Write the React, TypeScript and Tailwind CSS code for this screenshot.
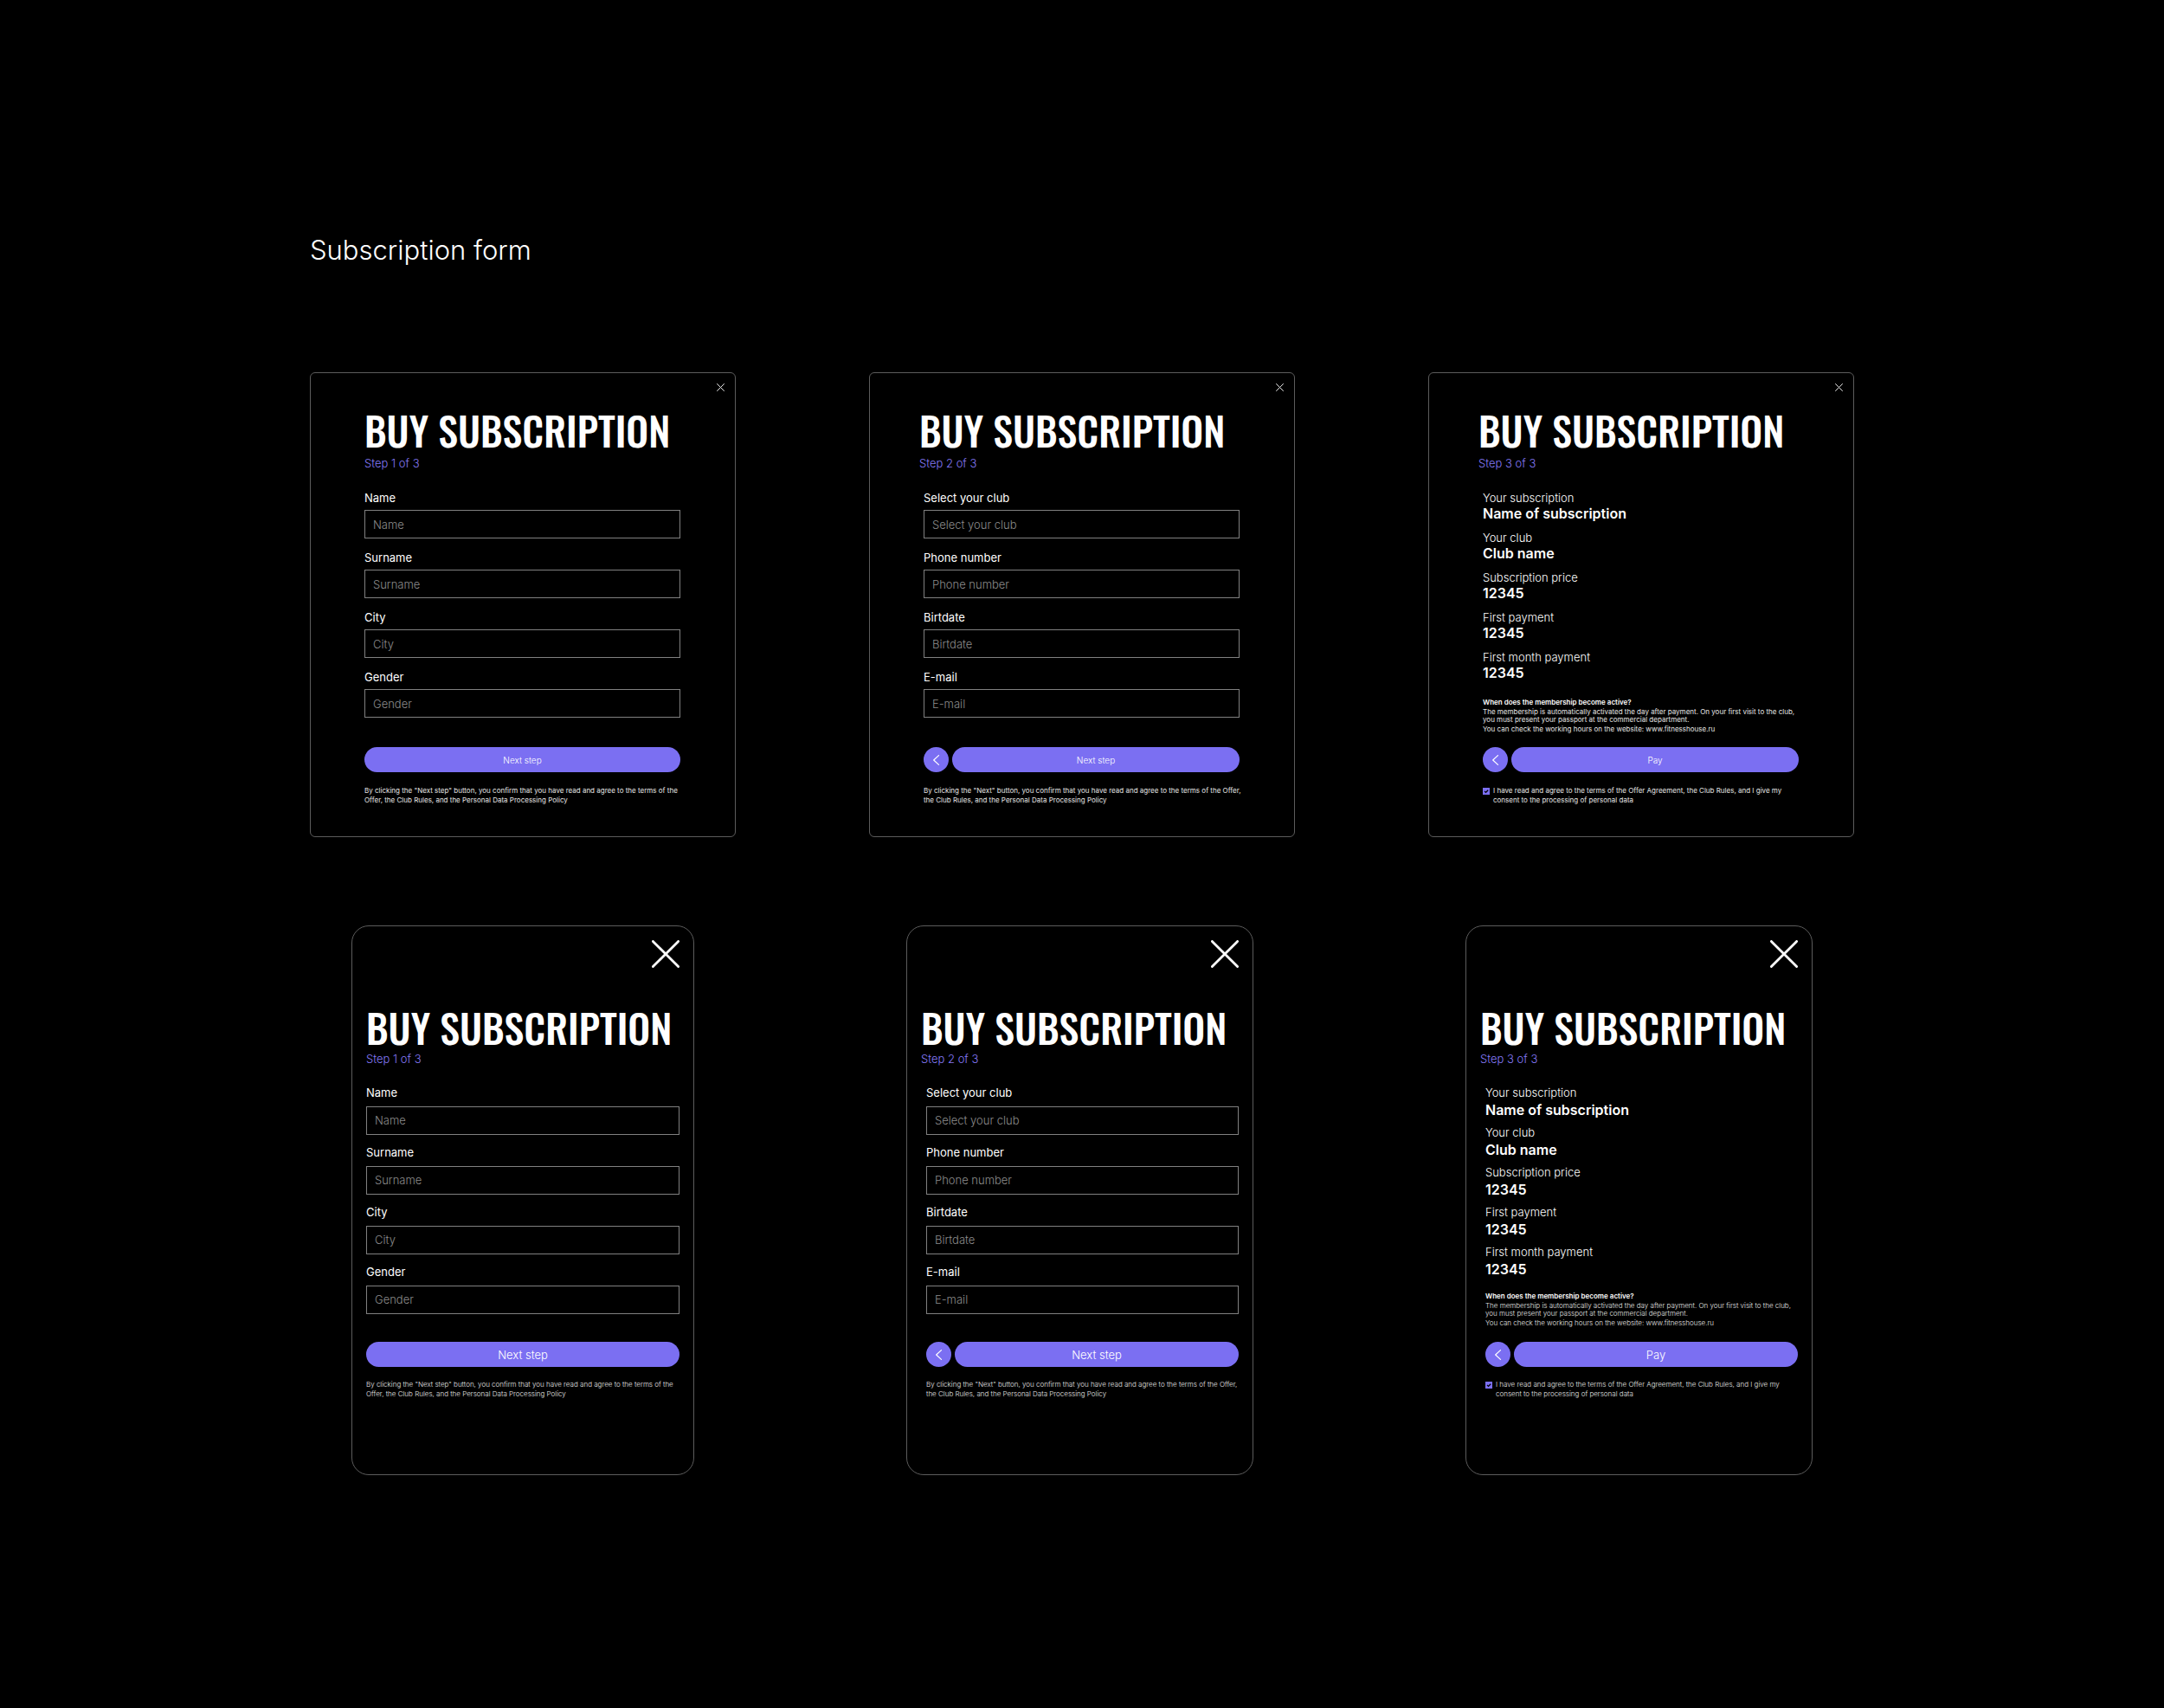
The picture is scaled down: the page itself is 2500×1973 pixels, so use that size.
import { useId } from 'react'

type Size = 'desktop' | 'mobile'

const steps = [
  {
    fields: ['Name', 'Surname', 'City', 'Gender'],
    action: 'Next step',
    terms: [
      'By clicking the "Next step" button, you confirm that you have read and agree to the terms of the',
      'Offer, the Club Rules, and the Personal Data Processing Policy',
    ],
  },
  {
    fields: ['Select your club', 'Phone number', 'Birtdate', 'E-mail'],
    action: 'Next step',
    terms: [
      'By clicking the "Next" button, you confirm that you have read and agree to the terms of the Offer,',
      'the Club Rules, and the Personal Data Processing Policy',
    ],
  },
  {
    fields: [],
    action: 'Pay',
    terms: [
      'I have read and agree to the terms of the Offer Agreement, the Club Rules, and I give my',
      'consent to the processing of personal data',
    ],
  },
]

const summary = [
  { label: 'Your subscription', value: 'Name of subscription' },
  { label: 'Your club', value: 'Club name' },
  { label: 'Subscription price', value: '12345' },
  { label: 'First payment', value: '12345' },
  { label: 'First month payment', value: '12345' },
]

function CloseButton({ size }: { size: Size }) {
  return (
    <button type="button" aria-label="Close" className="block">
      {size === 'desktop' ? (
        <svg className="block size-[9px]" viewBox="0 0 9 9" fill="none" stroke="#e5e5e5" strokeLinecap="round">
          <path d="M.5.5l8 8M8.5.5l-8 8" />
        </svg>
      ) : (
        <svg className="block size-8" viewBox="0 0 32 32" fill="none" stroke="#fff" strokeWidth="2.8" strokeLinecap="round">
          <path d="M1.4 1.4l29.2 29.2M30.6 1.4L1.4 30.6" />
        </svg>
      )}
    </button>
  )
}

function Field({ label, size }: { label: string; size: Size }) {
  const id = useId()
  return (
    <div className={size === 'desktop' ? 'flex flex-col gap-1.5' : 'flex flex-col gap-2'}>
      <label htmlFor={id} className="text-[13px] leading-4">{label}</label>
      <input
        id={id}
        type="text"
        placeholder={label}
        className={`h-[33px] w-full border border-[#808080] bg-black px-[9px] text-[13px] leading-4 font-light text-white placeholder:text-[#8c8c8c] ${size === 'mobile' ? 'pb-0.5' : ''}`}
      />
    </div>
  )
}

function Summary({ size }: { size: Size }) {
  return (
    <>
      <dl className={size === 'desktop' ? 'flex flex-col gap-2.5' : 'flex flex-col gap-2'}>
        {summary.map((item) => (
          <div key={item.label} className={size === 'desktop' ? 'flex flex-col' : 'flex flex-col gap-0.5'}>
            <dt className="text-[13px] leading-4 font-light">{item.label}</dt>
            <dd className="text-base leading-5 font-semibold">{item.value}</dd>
          </div>
        ))}
      </dl>
      <div className={`flex flex-col gap-px text-[8px] leading-[11px] whitespace-nowrap ${size === 'desktop' ? 'mt-[19px]' : 'mt-4 font-light'}`}>
        <h3 className="font-semibold">When does the membership become active?</h3>
        <p className="leading-[9px] text-[#e5e5e5]">
          The membership is automatically activated the day after payment. On your first visit to the club,
          <br />
          you must present your passport at the commercial department.
        </p>
        <p className="text-[#e5e5e5]">You can check the working hours on the website: www.fitnesshouse.ru</p>
      </div>
    </>
  )
}

function Terms({ lines, size, checkbox }: { lines: string[]; size: Size; checkbox: boolean }) {
  const weight = size === 'desktop' ? 'font-normal' : 'font-light'
  const text = (
    <>
      {lines[0]}
      <br />
      {lines[1]}
    </>
  )
  if (!checkbox) {
    return <p className={`text-[8px] leading-[11px] whitespace-nowrap text-[#e5e5e5] ${weight}`}>{text}</p>
  }
  return (
    <label className={`flex items-start gap-1 text-[8px] leading-[11px] whitespace-nowrap text-[#e5e5e5] ${weight}`}>
      <span className="relative mt-0.5 block size-2">
        <input type="checkbox" defaultChecked className="peer block size-2 appearance-none bg-[#7b6ff2]" />
        <svg className="pointer-events-none absolute inset-0 hidden size-2 peer-checked:block" viewBox="0 0 8 8" fill="none" stroke="#000" strokeWidth="1.2">
          <path d="M2 3.8l1.5 1.5L6.2 2.8" />
        </svg>
      </span>
      <span>{text}</span>
    </label>
  )
}

function SubscriptionForm({ step, size }: { step: number; size: Size }) {
  const { fields, action, terms } = steps[step - 1]
  const desktop = size === 'desktop'
  const first = step === 1

  const card = desktop
    ? 'rounded-md pt-3 pb-9'
    : first
      ? 'w-[396px] rounded-[20px] pt-4 pb-[87px]'
      : 'w-[401px] rounded-[20px] pt-4 pb-[87px]'
  const header = desktop ? (first ? 'mt-4 gap-[3px] pl-[62px]' : 'mt-4 gap-[3px] pl-[57px]') : 'mt-10 gap-px pl-4'
  const body = desktop ? 'pr-[63px] pl-[62px]' : first ? 'px-4' : 'pr-4 pl-[22px]'
  const actions = desktop
    ? fields.length > 0 ? 'mt-[34px] mb-4' : 'mt-[15px] mb-4'
    : fields.length > 0 ? 'mt-8 mb-[15px]' : 'mt-4 mb-[15px]'

  return (
    <form className={`border border-[#5c5c5c] ${card}`} onSubmit={(e) => e.preventDefault()}>
      <div className={desktop ? 'flex justify-end pr-3' : 'flex justify-end pr-4'}>
        <CloseButton size={size} />
      </div>

      <div className={`flex flex-col ${header}`}>
        <h2 className="font-[Oswald,'Roboto_Condensed',sans-serif] text-[46px] leading-[56px] font-medium whitespace-nowrap">
          BUY SUBSCRIPTION
        </h2>
        <p className="text-[13px] leading-4 font-light text-[#8479f7]">Step {step} of 3</p>
      </div>

      <div className={`${desktop ? 'mt-6' : 'mt-[23px]'} ${body}`}>
        {fields.length > 0 ? (
          <div className={desktop ? 'flex flex-col gap-3.5' : 'flex flex-col gap-3'}>
            {fields.map((label) => (
              <Field key={label} label={label} size={size} />
            ))}
          </div>
        ) : (
          <Summary size={size} />
        )}

        <div className={`flex gap-1 ${actions}`}>
          {!first && (
            <button type="button" aria-label="Back" className="flex size-[29px] shrink-0 items-center justify-center rounded-full bg-[#7b6ff2]">
              <svg className="block h-3 w-2" viewBox="0 0 8 12" fill="none" stroke="#fff" strokeWidth="1.2" strokeLinecap="round" strokeLinejoin="round">
                <path d="M6.5.6L.7 6l5.8 5.4" />
              </svg>
            </button>
          )}
          <button
            type="submit"
            className={`h-[29px] flex-1 rounded-full bg-[#7b6ff2] leading-4 font-light ${desktop ? 'text-[10px]' : 'text-[13px]'}`}
          >
            {action}
          </button>
        </div>

        <Terms lines={terms} size={size} checkbox={step === 3} />
      </div>
    </form>
  )
}

export default function App() {
  return (
    <main className="min-h-screen bg-black px-12 pt-[269px] pb-[269px] font-[Inter,sans-serif] text-white">
      <div className="mx-auto max-w-[1784px]">
        <h1 className="text-[31px] leading-10 font-light">Subscription form</h1>

        <div className="mt-[121px] grid grid-cols-3 gap-[154px]">
          <SubscriptionForm step={1} size="desktop" />
          <SubscriptionForm step={2} size="desktop" />
          <SubscriptionForm step={3} size="desktop" />
        </div>

        <div className="mt-[102px] flex justify-between px-12">
          <SubscriptionForm step={1} size="mobile" />
          <SubscriptionForm step={2} size="mobile" />
          <SubscriptionForm step={3} size="mobile" />
        </div>
      </div>
    </main>
  )
}
